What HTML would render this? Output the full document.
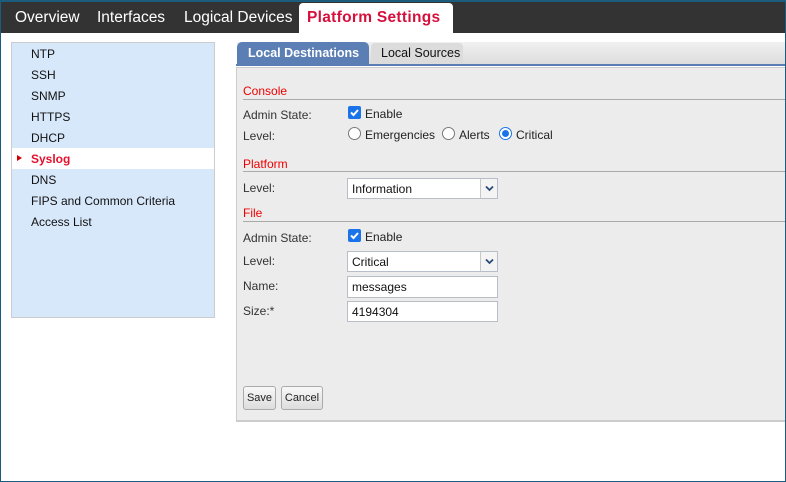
<!DOCTYPE html>
<html><head><meta charset="utf-8"><style>
*{box-sizing:border-box;margin:0;padding:0}
body{width:786px;height:482px;position:relative;overflow:hidden;background:#fff;font-family:"Liberation Sans",Verdana,sans-serif;font-size:12px;color:#222}
.frame{position:absolute;left:0;top:0;width:786px;height:482px;border:1px solid #1a5b7e;border-top-width:2px;z-index:10;pointer-events:none}
.top{position:absolute;left:0;top:0;width:786px;height:33px;background:#333}
.nav{position:absolute;top:9px;color:#fff;font-size:15.5px}
.navact{position:absolute;left:299px;top:3px;width:154px;height:30px;background:#fff;border-radius:4px 4px 0 0;color:#d6103c;font-weight:bold;font-size:15.5px;padding:6px 0 0 8px;letter-spacing:0.3px}
.side{position:absolute;left:11px;top:42px;width:204px;height:276px;background:#d8e8fb;border:1px solid #ccc}
.si{position:absolute;left:19px;font-size:12px;color:#111}
.sel{position:absolute;left:0;top:105px;width:202px;height:21px;background:#fff}
.strip{position:absolute;left:237px;top:42px;width:548px;height:23px;background:linear-gradient(#f0f0f0,#dcdcdc)}
.blue{position:absolute;left:236px;top:64px;width:550px;height:2px;background:#5b7fb5}
.t1{position:absolute;left:237px;top:42px;width:132px;height:23px;background:#5b7fb5;border-radius:5px 5px 0 0;color:#fff;font-weight:bold;font-size:12.5px;padding:4px 0 0 11px}
.t2{position:absolute;left:371px;top:43px;width:92px;height:21px;background:#dcdcdc;border-radius:4px 4px 0 0;font-size:12.5px;padding:3px 0 0 10px;color:#111}
.panel{position:absolute;left:236px;top:67px;width:550px;height:355px;background:#ececec;border:1px solid #ccc;border-bottom:2px solid #ccc;border-right:none}
.h{position:absolute;left:243px;color:#e00;font-size:12px}
.line{position:absolute;left:243px;width:543px;height:1px;background:#aaa}
.lb{position:absolute;left:243px;color:#333;font-size:12px}
.v{position:absolute;font-size:12px;color:#222}
.cb{position:absolute;width:13px;height:13px;background:#1a73e8;border-radius:2px}
.rd{position:absolute;width:13px;height:13px;border:1px solid #777;border-radius:50%;background:#fff}
.box{position:absolute;left:347px;width:151px;background:#fff;border:1px solid #b9bdc8;font-size:12px;padding:3px 0 0 4px;color:#111}
.dd{position:absolute;right:0;top:0;width:17px;height:100%;border-left:1px solid #c8c8c8;background:#f4f4f4}
.btn{position:absolute;top:386px;height:24px;border:1px solid #aaa;border-radius:3px;background:linear-gradient(#f8f8f8,#ddd);font-size:11px;padding:5px 0 0 0;text-align:center;color:#222}
</style></head><body>
<div class="top"></div>
<div class="nav" style="left:15px">Overview</div>
<div class="nav" style="left:97px">Interfaces</div>
<div class="nav" style="left:184px">Logical Devices</div>
<div class="navact">Platform Settings</div>

<div class="side">
<div class="sel"></div>
<div class="si" style="top:4px">NTP</div>
<div class="si" style="top:25px">SSH</div>
<div class="si" style="top:46px">SNMP</div>
<div class="si" style="top:67px">HTTPS</div>
<div class="si" style="top:88px">DHCP</div>
<div class="si" style="top:109px;color:#e5102e;font-weight:bold">Syslog</div>
<div style="position:absolute;left:5px;top:112px;width:0;height:0;border-left:5px solid #c00;border-top:3.5px solid transparent;border-bottom:3.5px solid transparent"></div>
<div class="si" style="top:130px">DNS</div>
<div class="si" style="top:151px">FIPS and Common Criteria</div>
<div class="si" style="top:172px">Access List</div>
</div>

<div class="strip"></div>
<div class="t1">Local Destinations</div>
<div class="t2">Local Sources</div>
<div class="blue"></div>
<div class="panel"></div>

<div class="h" style="top:84px">Console</div>
<div class="line" style="top:99px"></div>
<div class="lb" style="top:108px">Admin State:</div>
<div class="cb" style="left:348px;top:106px"><svg width="13" height="13"><path d="M3 6.5l2.5 2.5 4.5-5" stroke="#fff" stroke-width="2" fill="none"/></svg></div>
<div class="v" style="left:365px;top:107px">Enable</div>
<div class="lb" style="top:129px">Level:</div>
<div class="rd" style="left:348px;top:127px"></div>
<div class="v" style="left:365px;top:128px">Emergencies</div>
<div class="rd" style="left:442px;top:127px"></div>
<div class="v" style="left:459px;top:128px">Alerts</div>
<div class="rd" style="left:499px;top:127px;border-color:#1a73e8"><div style="position:absolute;left:2px;top:2px;width:7px;height:7px;border-radius:50%;background:#1a73e8"></div></div>
<div class="v" style="left:516px;top:128px">Critical</div>

<div class="h" style="top:157px">Platform</div>
<div class="line" style="top:171px"></div>
<div class="lb" style="top:181px">Level:</div>
<div class="box" style="top:178px;height:21px">Information<div class="dd"><svg width="17" height="19"><path d="M5 7.5l3.5 3.5 3.5-3.5" stroke="#2d4a7a" stroke-width="1.8" fill="none"/></svg></div></div>

<div class="h" style="top:206px">File</div>
<div class="line" style="top:221px"></div>
<div class="lb" style="top:231px">Admin State:</div>
<div class="cb" style="left:348px;top:229px"><svg width="13" height="13"><path d="M3 6.5l2.5 2.5 4.5-5" stroke="#fff" stroke-width="2" fill="none"/></svg></div>
<div class="v" style="left:365px;top:230px">Enable</div>
<div class="lb" style="top:254px">Level:</div>
<div class="box" style="top:251px;height:21px">Critical<div class="dd"><svg width="17" height="19"><path d="M5 7.5l3.5 3.5 3.5-3.5" stroke="#2d4a7a" stroke-width="1.8" fill="none"/></svg></div></div>
<div class="lb" style="top:279px">Name:</div>
<div class="box" style="top:276px;height:22px">messages</div>
<div class="lb" style="top:304px">Size:*</div>
<div class="box" style="top:301px;height:21px">4194304</div>

<div class="btn" style="left:243px;width:33px">Save</div>
<div class="btn" style="left:281px;width:42px">Cancel</div>
<div class="frame"></div>
</body></html>
